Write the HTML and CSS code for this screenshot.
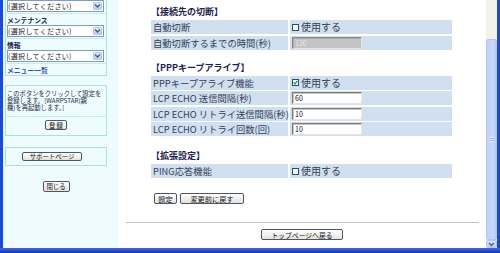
FILE: index.html
```html
<!DOCTYPE html>
<html lang="ja">
<head>
<meta charset="utf-8">
<title>接続先設定</title>
<link rel="stylesheet" href="styles.css">
</head>
<body>
<div class="window">
  <div class="body-row">
    <aside class="sidebar">
      <div class="side-inner">
        <div class="box">
          <div class="cell">
            <div class="side-label">設定</div>
            <div class="fsel"><span class="fsel-text">(選択してください)</span><span class="fsel-arrow"><svg width="7" height="6" viewBox="0 0 7 6"><path d="M1 1.5 L3.5 4 L6 1.5" fill="none" stroke="#4a5c86" stroke-width="1.4"/></svg></span></div>
          </div>
          <div class="cell">
            <div class="side-label">メンテナンス</div>
            <div class="fsel"><span class="fsel-text">(選択してください)</span><span class="fsel-arrow"><svg width="7" height="6" viewBox="0 0 7 6"><path d="M1 1.5 L3.5 4 L6 1.5" fill="none" stroke="#4a5c86" stroke-width="1.4"/></svg></span></div>
          </div>
          <div class="cell">
            <div class="side-label">情報</div>
            <div class="fsel"><span class="fsel-text">(選択してください)</span><span class="fsel-arrow"><svg width="7" height="6" viewBox="0 0 7 6"><path d="M1 1.5 L3.5 4 L6 1.5" fill="none" stroke="#4a5c86" stroke-width="1.4"/></svg></span></div>
          </div>
          <div class="cell link-cell">
            <a class="menu-link" href="#">メニュー一覧</a>
          </div>
        </div>

        <div class="box msg-box">
          <div class="msg">このボタンをクリックして設定を<br>登録します。[WARPSTAR(親<br>機)を再起動します。]</div>
          <div class="cell btn-cell"><button class="sbtn reg">登録</button></div>
        </div>

        <div class="box support-box">
          <button class="sbtn support">サポートページ</button>
        </div>

        <div class="close-row"><button class="sbtn close">閉じる</button></div>
      </div>
    </aside>

    <main class="main">
      <div class="content">
        <section class="sec sec1">
          <h2 class="sec-title">【接続先の切断】</h2>
          <div class="rows">
            <div class="row"><div class="lbl">自動切断</div><div class="val"><span class="cb"></span><span class="cb-text">使用する</span></div></div>
            <div class="row"><div class="lbl">自動切断するまでの時間(秒)</div><div class="val"><input class="tin disabled" type="text" value="120" disabled></div></div>
          </div>
        </section>

        <section class="sec sec2">
          <h2 class="sec-title">【PPPキープアライブ】</h2>
          <div class="rows">
            <div class="row"><div class="lbl">PPPキープアライブ機能</div><div class="val"><span class="cb checked"><svg width="5" height="5" viewBox="0 0 5 5"><path d="M0.6 2.4 L2 3.9 L4.4 0.9" fill="none" stroke="#22a022" stroke-width="1.3"/></svg></span><span class="cb-text">使用する</span></div></div>
            <div class="row"><div class="lbl">LCP ECHO 送信間隔(秒)</div><div class="val"><input class="tin" type="text" value="60"></div></div>
            <div class="row"><div class="lbl">LCP ECHO リトライ送信間隔(秒)</div><div class="val"><input class="tin" type="text" value="10"></div></div>
            <div class="row"><div class="lbl">LCP ECHO リトライ回数(回)</div><div class="val"><input class="tin" type="text" value="10"></div></div>
          </div>
        </section>

        <section class="sec sec3">
          <h2 class="sec-title">【拡張設定】</h2>
          <div class="rows">
            <div class="row"><div class="lbl">PING応答機能</div><div class="val"><span class="cb"></span><span class="cb-text">使用する</span></div></div>
          </div>
        </section>

        <div class="actions">
          <button class="mbtn set">設定</button>
          <button class="mbtn revert">変更前に戻す</button>
        </div>
      </div>
      <div class="divider"></div>
      <div class="top-row"><button class="mbtn top">トップページへ戻る</button></div>
    </main>

    <div class="scrollbar">
      <div class="sb-track"></div>
      <div class="sb-thumb"><span class="grip"></span></div>
      <div class="sb-down"><svg width="7" height="5" viewBox="0 0 7 5"><path d="M1 1 L3.5 3.5 L6 1" fill="none" stroke="#4d6185" stroke-width="1.4"/></svg></div>
    </div>
  </div>
  <div class="bottom-bar"></div>
</div>
</body>
</html>
```

FILE: styles.css
```css
* { box-sizing: border-box; }

html, body {
  margin: 0;
  padding: 0;
}

body {
  width: 500px;
  height: 253px;
  overflow: hidden;
  background: #ffffff;
  font-family: "Noto Sans CJK JP", "Liberation Sans", sans-serif;
  color: #333d55;
}

.window {
  width: 500px;
  height: 253px;
  display: flex;
  flex-direction: column;
}

.body-row {
  flex: 1;
  display: flex;
  min-height: 0;
  border-left: 3px solid #1a4ad6;
  border-right: 3px solid #1a4ad6;
}

.bottom-bar {
  height: 5px;
  flex: none;
  background: linear-gradient(#3a6ae4, #0f36b8);
}

/* ---------- sidebar ---------- */
.sidebar {
  width: 115px;
  flex: none;
  background: #effcfd;
  overflow: hidden;
}

.side-inner {
  margin-top: -12px;
  padding-left: 2px;
}

.box {
  width: 102px;
  border: 1px solid #a6e2ea;
}

.cell {
  padding: 2px 2px 1px 1px;
  border-top: 1px solid #c4ecf1;
}

.cell:first-child { border-top: none; }

.side-label {
  font-size: 6.8px;
  font-weight: bold;
  line-height: 9px;
  height: 9px;
  color: #1a2458;
  white-space: nowrap;
}

.fsel {
  width: 97px;
  height: 12px;
  border: 1px solid #7f9db9;
  background: #ffffff;
  display: flex;
}

.fsel-text {
  flex: 1;
  font-size: 7px;
  line-height: 10px;
  letter-spacing: 0.35px;
  color: #1d1d1d;
  white-space: nowrap;
}

.fsel-arrow {
  width: 9px;
  margin: 1px 1px 1px 0;
  background: linear-gradient(#dfe8fd, #b8cbf8);
  border: 1px solid #b6c9f3;
  border-radius: 1px;
  display: flex;
  align-items: center;
  justify-content: center;
}

.link-cell {
  padding: 2px 1px 1px 1px;
  height: 12px;
}

.menu-link {
  display: block;
  font-size: 6.8px;
  line-height: 9px;
  font-weight: bold;
  color: #2a52d4;
  text-decoration: none;
}

.msg-box {
  margin-top: 9px;
}

.msg {
  height: 30px;
  padding: 4px 0 5px 1px;
  font-size: 6.3px;
  line-height: 7px;
  color: #1e2a4a;
  white-space: nowrap;
}

.btn-cell {
  height: 19px;
  padding: 3px 0 0 0;
  display: flex;
  justify-content: center;
}

.sbtn {
  font-family: inherit;
  font-size: 6.4px;
  line-height: 7px;
  height: 10px;
  padding: 0 3px;
  border: 1px solid #4c566a;
  border-radius: 2px;
  background: linear-gradient(#ffffff, #e4e2da);
  color: #111;
  white-space: nowrap;
}

.sbtn.reg {
  width: 22px;
  letter-spacing: 1px;
  padding: 0 0 0 1px;
}

.support-box {
  margin-top: 11px;
  height: 19px;
  display: flex;
  align-items: center;
  justify-content: center;
}

.sbtn.support {
  width: 60px;
  height: 9px;
  margin-right: 8px;
}

.close-row {
  width: 102px;
  margin-top: 15px;
  display: flex;
  justify-content: center;
}

.sbtn.close {
  width: 27px;
  height: 11px;
  padding: 0;
}

/* ---------- main ---------- */
.main {
  flex: 1;
  background: #ffffff;
  padding-top: 6px;
  min-width: 0;
}

.content {
  padding-left: 33px;
}

.sec-title {
  margin: 0;
  font-size: 9px;
  line-height: 12px;
  height: 12px;
  font-weight: bold;
  color: #1b2252;
  white-space: nowrap;
}

.rows {
  margin-top: 2px;
  display: flex;
  flex-direction: column;
  gap: 1.5px;
}

.sec2 { margin-top: 12px; }
.sec3 { margin-top: 14px; }

.row {
  display: grid;
  grid-template-columns: 137px 162px;
  column-gap: 2px;
  height: 14px;
}

.lbl, .val {
  background: #d0e0f0;
  height: 14px;
}

.lbl {
  padding-left: 2px;
  font-size: 9.3px;
  line-height: 14px;
  white-space: nowrap;
  color: #333d55;
}

.val {
  padding-left: 2px;
  display: flex;
  align-items: center;
}

.cb {
  width: 7px;
  height: 7px;
  border: 1px solid #1c5180;
  background: #ffffff;
  display: flex;
  align-items: center;
  justify-content: center;
  flex: none;
}

.cb-text {
  margin-left: 2px;
  font-size: 10px;
  line-height: 14px;
  color: #333d55;
  white-space: nowrap;
}

.tin {
  width: 70px;
  height: 12px;
  margin: 0;
  padding: 0 0 0 2px;
  font-family: inherit;
  font-size: 7px;
  line-height: 10px;
  color: #111;
  background: #ffffff;
  border-top: 1px solid #7a7a7a;
  border-left: 1px solid #7a7a7a;
  border-right: 1px solid #e4e4e4;
  border-bottom: 1px solid #e4e4e4;
  box-shadow: inset 1px 1px 0 #c4c4c4;
  outline: none;
}

.tin.disabled {
  background: #c4c4c4;
  color: #e6e6e6;
  border-top-color: #8a8a8a;
  border-left-color: #8a8a8a;
  box-shadow: inset 1px 1px 0 #a8a8a8;
}

.actions {
  margin-top: 15px;
  padding-left: 3px;
  display: flex;
  gap: 3px;
  height: 11px;
}

.mbtn {
  font-family: inherit;
  font-size: 7.2px;
  line-height: 8px;
  height: 11px;
  padding: 0;
  border: 1px solid #4c566a;
  border-radius: 2px;
  background: linear-gradient(#ffffff, #e4e2da);
  color: #111;
  white-space: nowrap;
}

.mbtn.set { width: 23px; }
.mbtn.revert { width: 64px; }

.divider {
  margin: 18px 7px 0 8px;
  border-top: 1px solid #c9c1b3;
}

.top-row {
  margin-top: 6px;
  display: flex;
  justify-content: center;
}

.mbtn.top {
  width: 82px;
  font-size: 6.8px;
}

/* ---------- scrollbar ---------- */
.scrollbar {
  width: 11px;
  flex: none;
  display: flex;
  flex-direction: column;
  background: #f4f3ee;
}

.sb-track {
  height: 39px;
  flex: none;
  background-color: #f3f2ec;
  background-image: radial-gradient(#ffffff 0.6px, transparent 0.7px);
  background-size: 2px 2px;
}

.sb-thumb {
  height: 201px;
  flex: none;
  background: linear-gradient(90deg, #c0d1fb, #c8d7fc 70%, #b8cbf6);
  border: 1px solid #b2c6f4;
  border-radius: 2px;
  display: flex;
  align-items: center;
  justify-content: center;
}

.grip {
  width: 5px;
  height: 5px;
  background: repeating-linear-gradient(#eef3ff 0 1px, #9fb5e8 1px 2px);
}

.sb-down {
  height: 8px;
  flex: none;
  background: linear-gradient(#d6e2fd, #bccdf8);
  border: 1px solid #b2c6f4;
  border-radius: 2px;
  display: flex;
  align-items: center;
  justify-content: center;
}
```
